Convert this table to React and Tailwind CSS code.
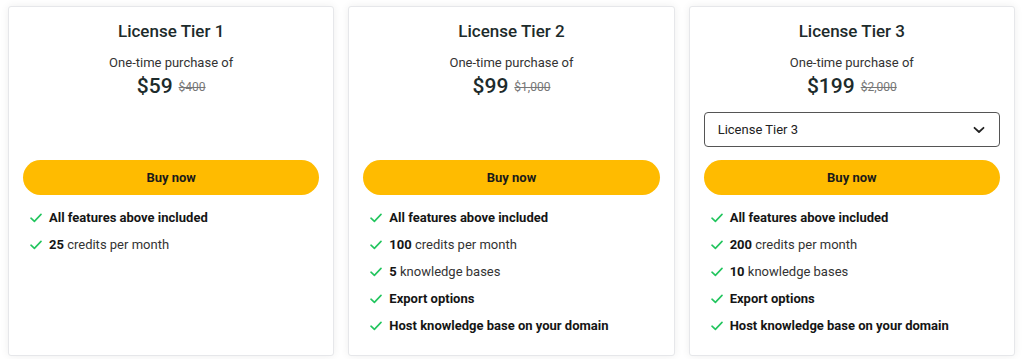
import React from "react";

const tiers = [
  {
    name: "License Tier 1",
    price: "$59",
    was: "$400",
    select: false,
    features: [
      { bold: "All features above included", rest: "" },
      { bold: "25", rest: " credits per month" },
    ],
  },
  {
    name: "License Tier 2",
    price: "$99",
    was: "$1,000",
    select: false,
    features: [
      { bold: "All features above included", rest: "" },
      { bold: "100", rest: " credits per month" },
      { bold: "5", rest: " knowledge bases" },
      { bold: "Export options", rest: "" },
      { bold: "Host knowledge base on your domain", rest: "" },
    ],
  },
  {
    name: "License Tier 3",
    price: "$199",
    was: "$2,000",
    select: true,
    features: [
      { bold: "All features above included", rest: "" },
      { bold: "200", rest: " credits per month" },
      { bold: "10", rest: " knowledge bases" },
      { bold: "Export options", rest: "" },
      { bold: "Host knowledge base on your domain", rest: "" },
    ],
  },
];

const Check = () => (
  <svg width="12" height="10" viewBox="0 0 12 10" fill="none" className="shrink-0">
    <path d="M1 5.2 L4.4 8.4 L11 1.4" stroke="#22c55e" strokeWidth="1.6" strokeLinecap="round" strokeLinejoin="round" />
  </svg>
);

const Chevron = () => (
  <svg width="12" height="8" viewBox="0 0 12 8" fill="none">
    <path d="M1.5 1.8 L6 6 L10.5 1.8" stroke="#222" strokeWidth="1.8" strokeLinecap="round" strokeLinejoin="round" />
  </svg>
);

function TierCard({ tier }) {
  return (
    <div className="bg-white border border-[#e6e7ea] rounded-[3px] shadow-[0_0_8px_rgba(0,0,0,0.07)] px-[14px] pt-3 pb-4 flex flex-col">
      <h2 className="text-center text-[17px] leading-6 font-medium text-[#1d2b2b]">{tier.name}</h2>
      <p className="mt-[10px] text-center text-[13px] leading-5 text-[#333]">One-time purchase of</p>
      <div className="flex items-center justify-center gap-[6px] h-[27px]">
        <span className="text-[21px] font-medium text-[#1d2b2b]">{tier.price}</span>
        <span className="text-[12px] text-[#777] line-through mt-[1px]">{tier.was}</span>
      </div>
      {tier.select ? (
        <div className="mt-3 h-[35px] border border-[#555] rounded-[4px] flex items-center justify-between pl-[13px] pr-[14px]">
          <span className="text-[13px] text-[#222]">{tier.name}</span>
          <Chevron />
        </div>
      ) : (
        <div className="mt-3 h-[35px]" />
      )}
      <button className="mt-[13px] h-[35px] w-full rounded-full bg-[#ffbb00] text-[13px] font-bold text-[#1a1a1a]">
        Buy now
      </button>
      <ul className="mt-[9px] pl-[7px]">
        {tier.features.map((f, i) => (
          <li key={i} className="h-[27px] flex items-center gap-[7px] text-[13px]">
            <Check />
            <span className="text-[#333]">
              <span className="font-bold text-[#151515]">{f.bold}</span>
              {f.rest}
            </span>
          </li>
        ))}
      </ul>
    </div>
  );
}

export default function App() {
  return (
    <div className="min-h-screen bg-white font-['Roboto',sans-serif]">
      <div className="grid grid-cols-3 gap-[14px] pl-2 pr-[9px] pt-[6px] pb-[5px]">
        {tiers.map((t) => (
          <TierCard key={t.name} tier={t} />
        ))}
      </div>
    </div>
  );
}
